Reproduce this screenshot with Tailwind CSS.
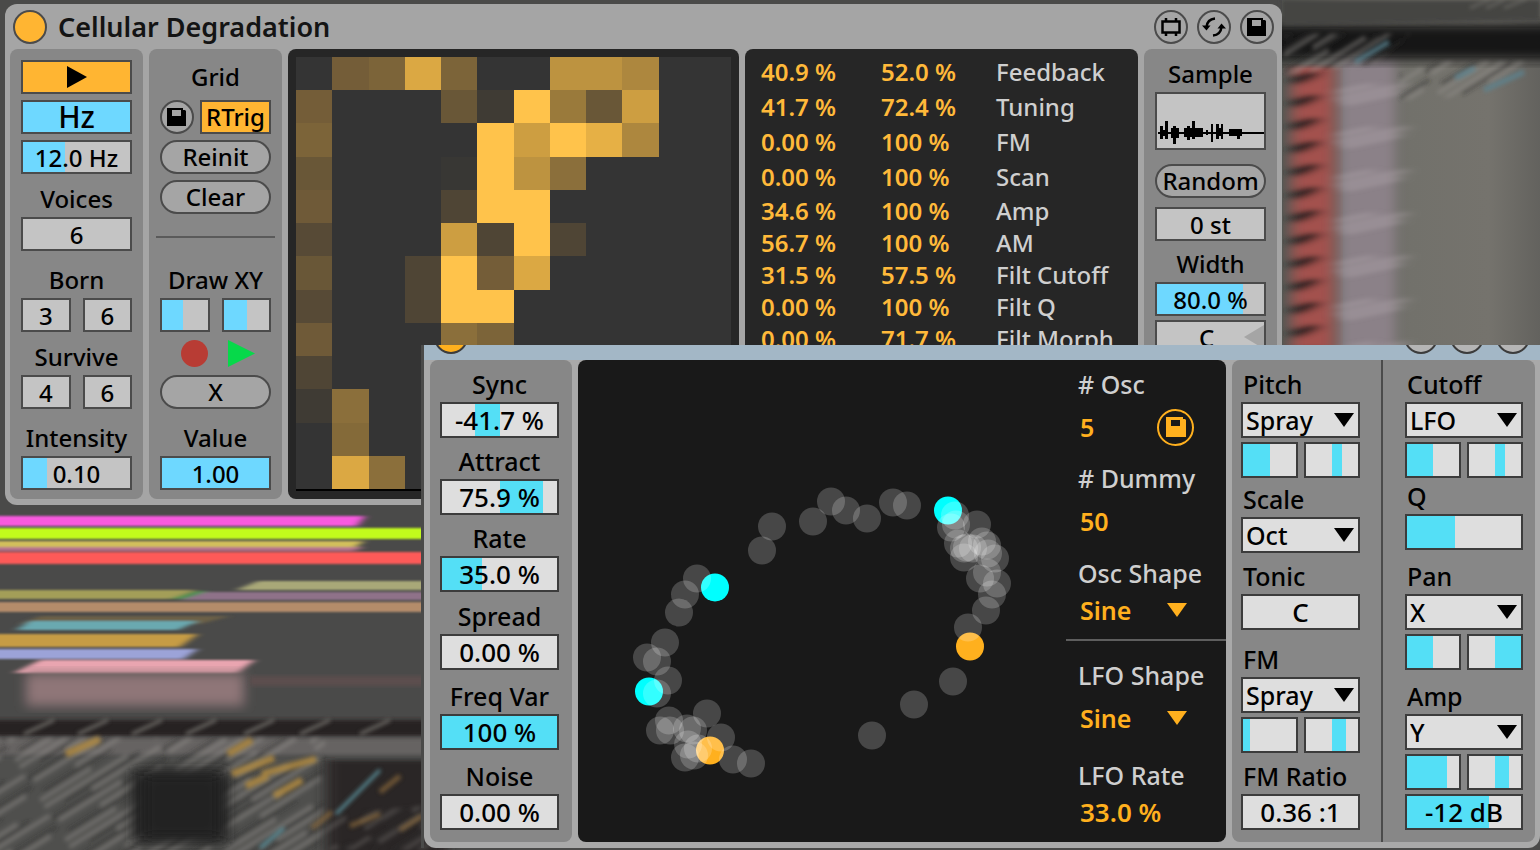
<!DOCTYPE html>
<html lang="en">
<head>
  <meta charset="UTF-8">
  <meta name="viewport" content="width=device-width, initial-scale=1.0">
  <title>Cellular Degradation</title>
  <script src="https://cdn.jsdelivr.net/npm/@tailwindcss/browser@4"></script>
</head>
<body class="relative min-h-screen overflow-hidden bg-[#4a4a49] font-['Noto_Sans',sans-serif] text-2xl font-medium text-black">

  <!-- Blurred arrangement view behind the devices -->
  <svg class="absolute inset-0 h-full w-full" viewBox="0 0 1540 850" preserveAspectRatio="none" aria-hidden="true">
    <defs>
      <filter id="b1" x="-10%" y="-50%" width="120%" height="200%"><feGaussianBlur stdDeviation="4 1"/></filter>
      <filter id="b2" x="-20%" y="-20%" width="140%" height="140%"><feGaussianBlur stdDeviation="6"/></filter>
      <filter id="b3" x="-20%" y="-20%" width="140%" height="140%"><feGaussianBlur stdDeviation="2"/></filter>
      <filter id="b4" x="-20%" y="-20%" width="140%" height="140%"><feGaussianBlur stdDeviation="7 2"/></filter>
      <linearGradient id="wall" x1="0" x2="1" y1="0" y2="0">
        <stop offset="0" stop-color="#555753"/>
        <stop offset=".25" stop-color="#6b6864"/>
        <stop offset=".5" stop-color="#72716b"/>
        <stop offset=".8" stop-color="#75736d"/>
        <stop offset="1" stop-color="#63625e"/>
      </linearGradient>
      <pattern id="streaks" width="130" height="47" patternUnits="userSpaceOnUse" patternTransform="rotate(-32)">
        <path d="M0 3h98M50 13h80M5 22h74M48 31h72M0 42h60" stroke="#94918d" stroke-width="4" opacity=".5"/>
        <path d="M20 8h90M0 17h58M75 26h55M8 36h80" stroke="#2c2b29" stroke-width="4" opacity=".45"/>
      </pattern>
      <pattern id="red" width="300" height="23" patternUnits="userSpaceOnUse" patternTransform="translate(1286 3) skewY(-16)">
        <rect width="300" height="23" fill="#a3514d"/>
        <ellipse cx="14" cy="11" rx="20" ry="5" fill="#2d2422"/>
      </pattern>
      <pattern id="pale" width="300" height="43" patternUnits="userSpaceOnUse" patternTransform="translate(1334 0) skewY(-12)">
        <path d="M0 14h74M8 20h60M0 7h40" stroke="#b7adb2" stroke-width="3" opacity=".6"/>
      </pattern>
    </defs>

    <!-- Right side -->
    <rect x="1282" width="258" height="345" fill="url(#wall)"/>
    <rect x="1340" y="55" width="55" height="300" fill="#8b8188" filter="url(#b2)"/>
    <rect x="1292" y="66" width="42" height="290" fill="url(#red)" filter="url(#b4)"/>
    <rect x="1335" y="80" width="76" height="275" fill="url(#pale)" filter="url(#b4)"/>
    <rect x="1270" y="24" width="290" height="36" fill="#191715" filter="url(#b2)"/>
    <path d="M1282 0h258v20l-258 6z" fill="#444442" filter="url(#b3)"/>
    <path d="M1284 34l60 0 70 0-40 30-90 10z" fill="url(#streaks)" filter="url(#b3)"/>
    <path d="M1400 62h130l-60 34-70 4z" fill="url(#streaks)" filter="url(#b3)"/>
    <g filter="url(#b3)" fill="none" stroke-width="5" opacity=".8">
      <path d="M1355 62l34-20M1484 90l40-18M1455 78l20-10" stroke="#5b8593"/>
      <path d="M1470 8l20-9M1486 8l18-8M1504 8l22-9" stroke="#77756f" stroke-width="2"/>
    </g>

    <!-- Left side clips -->
    <g filter="url(#b1)">
      <path d="M-10 516h375l-8 10H-10z" fill="#f85adf"/>
      <path d="M-10 528h450v11H-10z" fill="#c2fb1c"/>
      <path d="M-10 541h374l-8 6H-10z" fill="#d2bf5c"/>
      <path d="M-10 547h374l-10 4H-10z" fill="#b9738e"/>
      <path d="M-10 552h450v12H-10z" fill="#fd5a59"/>
      <path d="M258 581h180v9H236z" fill="#a9a878"/>
      <path d="M-10 590h206l-24 9H-10z" fill="#a39e58"/>
      <path d="M200 592h240v8H180z" fill="#8f7289"/>
      <path d="M196 591l-26 8h14l24-8z" fill="#4a9150"/>
      <path d="M-10 602h450v10H-10z" fill="#b48c6a"/>
      <path d="M40 616h190l-30 8H20z" fill="#6c6046"/>
      <path d="M30 621h168l-20 9H16z" fill="#6ba9b0"/>
      <path d="M-10 634h208l-18 13H-10z" fill="#c69c45"/>
      <path d="M-10 649h208l-14 10H-10z" fill="#9ca3d8"/>
      <path d="M40 660h215l-18 13H14z" fill="#e9a5b0"/>
    </g>
    <rect x="26" y="673" width="218" height="33" fill="#8f7678" filter="url(#b2)"/>
    <rect x="250" y="676" width="190" height="10" fill="#5c4e4e" filter="url(#b3)"/>

    <!-- Left side device strip -->
    <rect x="-10" y="720" width="450" height="16" fill="#252322" filter="url(#b3)"/>
    <rect x="-10" y="738" width="450" height="18" fill="#666462" filter="url(#b3)"/>
    <rect x="-10" y="756" width="450" height="110" fill="#504f4d" filter="url(#b3)"/>
    <rect x="-10" y="738" width="335" height="130" fill="url(#streaks)" filter="url(#b3)"/>
    <rect x="132" y="770" width="96" height="72" fill="#242220" filter="url(#b2)"/>
    <rect x="146" y="776" width="72" height="60" fill="#242220" filter="url(#b2)"/>
    <rect x="326" y="760" width="120" height="100" fill="#2a2827" filter="url(#b4)"/>
    <path d="M320 850l10-35 100-10v45z" fill="url(#streaks)" filter="url(#b3)" opacity=".6"/>
    <g filter="url(#b3)" fill="none">
      <path d="M232 774l42-16M262 774l54-15M246 786l22-10M274 796l28-16M228 754l24-14M66 754l34-15" stroke="#b08a3e" stroke-width="7" opacity=".85"/>
      <path d="M312 828l20-16M380 792l20-16M350 826l30-12M400 830l22-14" stroke="#8c6b3a" stroke-width="5" opacity=".7"/>
      <path d="M336 814l22-22 22-22M260 848l24-20" stroke="#5d97a3" stroke-width="3"/>
      <path d="M24 734l30-14M78 734l30-14M132 734l30-14M186 734l30-14M244 734l30-14M300 734l30-14M360 734l30-14" stroke="#77756f" stroke-width="3"/>
    </g>
  </svg>

  <!-- Device 1: Cellular Degradation -->
  <main class="absolute top-1 right-[258px] left-[5px] rounded-xl bg-[#a5a5a5] px-[5px] pb-1.5 [&_input]:block [&_input]:h-[34px] [&_input]:w-full [&_input]:min-w-0 [&_input]:appearance-none [&_input]:border-2 [&_input]:border-[#4b4b4b] [&_input]:bg-[#c4c4c4] [&_input]:text-center [&_label]:flex [&_label]:items-end [&_label]:justify-center [&_label]:pb-[3px] [&_label]:leading-[30px]">
    <header class="flex h-[45px] items-center gap-[9px] px-[3px]">
      <button class="size-[34px] rounded-full border-2 border-[#4b4b4b] bg-[#ffb532]" aria-label="Device on"></button>
      <h1 class="grow pl-0.5 text-[27px] font-semibold text-[#141414]">Cellular Degradation</h1>
      <button class="grid size-[34px] place-items-center rounded-full border-2 border-[#4b4b4b]" aria-label="Open window">
        <svg class="size-5" viewBox="0 0 20 20" fill="none" stroke="#000" stroke-width="2.5"><path d="M1.500 4.500h17v11h-17zM5 1v4M15 1v4M5 15v4M15 15v4"/></svg>
      </button>
      <button class="grid size-[34px] place-items-center rounded-full border-2 border-[#4b4b4b]" aria-label="Hot swap">
        <svg class="size-6" viewBox="0 0 24 24" fill="none" stroke="#000" stroke-width="2.5"><path d="M13 3.500C8 4 5 7 4.500 12M11 20.500C16 20 19 17 19.500 12"/><path d="M0 10.500h8.500l-4 5zM24 13.500h-8.500l4-5z" fill="#000" stroke="none"/></svg>
      </button>
      <button class="grid size-[34px] place-items-center rounded-full border-2 border-[#4b4b4b]" aria-label="Save preset">
        <svg class="size-5" viewBox="0 0 20 20"><path fill-rule="evenodd" d="M0 1h16v2h2l1 1v15H0zM5 3v6h9V3z"/></svg>
      </button>
    </header>

    <div class="flex gap-1.5">
      <!-- Clock and rules -->
      <section class="w-[133px] shrink-0 rounded-lg bg-[#878787] px-[11px] pt-[11px] pb-[9px]">
        <div class="flex flex-col gap-1.5">
          <button class="grid h-[34px] place-items-center border-2 border-[#4b4b4b] bg-[#ffb532]" aria-label="Play">
            <svg class="h-[22px] w-5" viewBox="0 0 20 22"><path d="M0 0l20 11L0 22z"/></svg>
          </button>
          <button class="h-[34px] border-2 border-[#4b4b4b] bg-[#6ed8ff] text-[30px] leading-[30px]">Hz</button>
          <input type="text" aria-label="Frequency" value="12.0 Hz" class="bg-[linear-gradient(90deg,#6ed8ff_39%,transparent_39%)]">
        </div>
        <label for="voices" class="h-[43px]">Voices</label>
        <input id="voices" type="text" value="6">
        <label for="born" class="h-[47px]">Born</label>
        <div class="flex gap-3">
          <input id="born" type="text" value="3">
          <input type="text" value="6" aria-label="Born max">
        </div>
        <label for="survive" class="h-[43px]">Survive</label>
        <div class="flex gap-3">
          <input id="survive" type="text" value="4">
          <input type="text" value="6" aria-label="Survive max">
        </div>
        <label for="intensity" class="h-[47px]">Intensity</label>
        <input id="intensity" type="text" value="0.10" class="bg-[linear-gradient(90deg,#6ed8ff_22%,transparent_22%)]">
      </section>

      <!-- Grid controls -->
      <section class="w-[133px] shrink-0 rounded-lg bg-[#878787] px-[11px] pt-[11px] pb-[9px]">
        <h2 class="flex h-10 items-center justify-center pb-1.5">Grid</h2>
        <div class="flex flex-col gap-1.5">
          <div class="flex gap-1.5">
            <button class="grid size-[34px] shrink-0 place-items-center rounded-full border-2 border-[#4b4b4b] bg-[#a5a5a5]" aria-label="Save grid">
              <svg class="size-5" viewBox="0 0 20 20"><path fill-rule="evenodd" d="M0 1h16v2h2l1 1v15H0zM5 3v6h9V3z"/></svg>
            </button>
            <button class="h-[34px] grow border-2 border-[#4b4b4b] bg-[#ffb532] leading-[30px]">RTrig</button>
          </div>
          <button class="h-[34px] rounded-full border-2 border-[#4b4b4b] bg-[#a5a5a5] leading-[30px]">Reinit</button>
          <button class="h-[34px] rounded-full border-2 border-[#4b4b4b] bg-[#a5a5a5] leading-[30px]">Clear</button>
        </div>
        <hr class="-mx-1 mt-[22px] border-t-2 border-[#5a5a5a]">
        <label for="drawx" class="h-[60px]">Draw XY</label>
        <div class="flex gap-3">
          <input id="drawx" type="range" class="bg-[linear-gradient(90deg,#6ed8ff_45%,transparent_45%)] [&::-webkit-slider-thumb]:invisible">
          <input type="range" aria-label="Draw Y" class="bg-[linear-gradient(90deg,#6ed8ff_50%,transparent_50%)] [&::-webkit-slider-thumb]:invisible">
        </div>
        <div class="flex h-[43px] items-center justify-end gap-5 pr-4">
          <button class="size-[27px] rounded-full bg-[#b83c34]" aria-label="Record"></button>
          <button aria-label="Play drawing"><svg class="size-[27px]" viewBox="0 0 27 27"><path d="M0 0l27 13.500L0 27z" fill="#06d94a"/></svg></button>
        </div>
        <button class="block h-[34px] w-full rounded-full border-2 border-[#4b4b4b] bg-[#a5a5a5] leading-[30px]">X</button>
        <label for="value" class="h-[47px]">Value</label>
        <input id="value" type="text" value="1.00" class="bg-[linear-gradient(90deg,#6ed8ff_100%,transparent_100%)]">
      </section>

      <!-- Cell grid -->
      <section class="flex grow flex-col rounded-lg bg-[#262626] p-2">
        <svg class="h-0 w-full shrink-0 grow border-b-2 border-black bg-[#343434]" viewBox="0 0 12 13" preserveAspectRatio="none" shape-rendering="crispEdges">
          <path d="M6 1h1v1H6zM5 2h1v3H5zM7 2h1v1H7zM6 4h1v2H6zM4 6h1v2H4zM5 7h1v1H5z" fill="#ffc34b"/>
          <path d="M3 0h1v1H3zM6 6h1v1H6zM1 12h1v1H1z" fill="#dba843"/>
          <path d="M8 2h1v1H8z" fill="#e6b045"/>
          <path d="M6 2h1v1H6zM4 5h1v1H4zM9 1h1v1H9z" fill="#cd9e41"/>
          <path d="M7 0h2v1H7zM6 3h1v1H6z" fill="#bd9340"/>
          <path d="M9 0h1v1H9zM9 2h1v1H9z" fill="#ad873e"/>
          <path d="M7 1h1v1H7z" fill="#9a7a3b"/>
          <path d="M7 3h1v1H7zM4 8h1v1H4zM1 10h1v1H1zM2 12h1v1H2z" fill="#8b6f3b"/>
          <path d="M1 11h1v1H1z" fill="#846a39"/>
          <path d="M2 0h1v1H2zM4 0h1v1H4zM0 2h1v1H0zM5 8h1v1H5z" fill="#7c6439"/>
          <path d="M1 0h1v1H1zM0 1h1v1H0zM5 6h1v1H5z" fill="#745d38"/>
          <path d="M0 4h1v1H0zM0 8h1v1H0z" fill="#6f5a38"/>
          <path d="M4 1h1v1H4zM8 1h1v1H8zM0 3h1v1H0zM0 6h1v1H0z" fill="#695737"/>
          <path d="M0 5h1v1H0zM0 7h1v1H0z" fill="#574a36"/>
          <path d="M5 5h1v1H5zM4 4h1v1H4zM7 5h1v1H7zM3 6h1v2H3zM0 9h1v1H0z" fill="#4f4535"/>
          <path d="M5 1h1v1H5zM0 10h1v1H0z" fill="#3f3b34"/>
          <path d="M4 3h1v1H4z" fill="#383734"/>
        </svg>
      </section>

      <!-- Modulation amounts -->
      <section class="w-[393px] shrink-0 rounded-lg bg-[#262626] pt-[5px] pl-4">
        <table class="w-full table-fixed text-left leading-8 [&_td]:p-0 [&_td]:font-semibold [&_td]:text-[#ffb93a] [&_th]:p-0 [&_th]:font-medium [&_th]:text-[#cfcfcf]">
          <colgroup><col class="w-[120px]"><col class="w-[115px]"><col></colgroup>
          <tbody>
            <tr class="h-[35px]"><td>40.9 %</td><td>52.0 %</td><th scope="row">Feedback</th></tr>
            <tr class="h-[35px]"><td>41.7 %</td><td>72.4 %</td><th scope="row">Tuning</th></tr>
            <tr class="h-[35px]"><td>0.00 %</td><td>100 %</td><th scope="row">FM</th></tr>
            <tr class="h-[35px]"><td>0.00 %</td><td>100 %</td><th scope="row">Scan</th></tr>
            <tr class="h-[33px]"><td>34.6 %</td><td>100 %</td><th scope="row">Amp</th></tr>
            <tr class="h-8"><td>56.7 %</td><td>100 %</td><th scope="row">AM</th></tr>
            <tr class="h-8"><td>31.5 %</td><td>57.5 %</td><th scope="row">Filt Cutoff</th></tr>
            <tr class="h-8"><td>0.00 %</td><td>100 %</td><th scope="row">Filt Q</th></tr>
            <tr class="h-8"><td>0.00 %</td><td>71.7 %</td><th scope="row">Filt Morph</th></tr>
          </tbody>
        </table>
      </section>

      <!-- Sample -->
      <section class="w-[133px] shrink-0 rounded-lg bg-[#878787] px-[11px]">
        <h2 class="flex h-[43px] items-end justify-center pb-[3px] leading-[30px]">Sample</h2>
        <div class="h-[58px] border-2 border-[#4b4b4b] bg-[#c4c4c4]">
          <svg class="h-full w-full" viewBox="0 0 108 54" preserveAspectRatio="none" shape-rendering="crispEdges">
            <path d="M1 38h107v2H1zM3 32h3v13H3zM8 27h3v18H8zM6 36h4v6H6zM14 34h8v10h-8zM16 32h3v18h-3zM27 34h19v9H27zM30 32h3v14h-3zM35 27h3v18h-3zM49 36h2v5h-2zM54 30h3v18h-3zM60 30h3v15h-3zM63 34h3v8h-3zM65 30h2v15h-2zM73 35h13v7H73zM81 35h3v10h-3z"/>
          </svg>
        </div>
        <button class="mt-[14px] block h-[34px] w-full rounded-full border-2 border-[#4b4b4b] bg-[#a5a5a5] text-center leading-[30px]">Random</button>
        <input type="text" value="0 st" aria-label="Transpose" class="mt-[9px]">
        <label for="width" class="h-[41px]">Width</label>
        <input id="width" type="text" value="80.0 %" class="bg-[linear-gradient(90deg,#6ed8ff_80%,transparent_80%)]">
        <div class="mt-1 grid items-center">
          <input type="text" value="C" aria-label="Root note" class="col-start-1 row-start-1 pr-2">
          <svg class="col-start-1 row-start-1 mr-0.5 h-6 w-5 justify-self-end" viewBox="0 0 20 24"><path d="M20 0v24L0 12z" fill="#a5a5a5"/></svg>
        </div>
      </section>
    </div>
  </main>

  <!-- Device 2: oscillator swarm -->
  <aside class="absolute top-[345px] right-0 left-[421px] border-l-[3px] border-[#4a4a49] text-[25px]">
    <div class="overflow-hidden rounded-b-xl bg-[#a9a9a9] pb-1.5 [&_input]:block [&_input]:h-9 [&_input]:w-full [&_input]:min-w-0 [&_input]:appearance-none [&_input]:border-2 [&_input]:border-[#3c3c3c] [&_input]:bg-[#dedede] [&_input]:text-center [&_input]:text-[26px] [&_label]:flex [&_label]:items-end [&_label]:pb-[3px] [&_label]:leading-[30px] [&_label]:whitespace-nowrap">
      <header class="flex h-[15px] items-end gap-3 overflow-hidden bg-[#a3b7c6] pr-2.5 pb-1.5 pl-2.5">
        <button class="mr-auto size-[34px] shrink-0 rounded-full border-2 border-[#3c3c3c] bg-[#ffb01e]" aria-label="Device on"></button>
        <button class="size-[34px] shrink-0 rounded-full border-2 border-[#3c3c3c] bg-[#b5b5b5]" aria-label="Open window"></button>
        <button class="size-[34px] shrink-0 rounded-full border-2 border-[#3c3c3c] bg-[#b5b5b5]" aria-label="Hot swap"></button>
        <button class="size-[34px] shrink-0 rounded-full border-2 border-[#3c3c3c] bg-[#b5b5b5]" aria-label="Save preset"></button>
      </header>

      <div class="flex gap-1.5 pr-[5px] pl-1.5">
        <!-- Swarm parameters -->
        <section class="w-[142px] shrink-0 rounded-lg bg-[#878787] pr-[13px] pb-3 pl-2.5 [&_label]:justify-center">
          <label for="sync" class="h-[42px]">Sync</label>
          <input id="sync" type="text" value="-41.7 %" class="bg-[linear-gradient(90deg,transparent_29%,#54dff6_29%_50%,transparent_50%)]">
          <label for="attract" class="h-[41px]">Attract</label>
          <input id="attract" type="text" value="75.9 %" class="bg-[linear-gradient(90deg,transparent_50%,#54dff6_50%_88%,transparent_88%)]">
          <label for="rate" class="h-[41px]">Rate</label>
          <input id="rate" type="text" value="35.0 %" class="bg-[linear-gradient(90deg,#54dff6_35%,transparent_35%)]">
          <label for="spread" class="h-[42px]">Spread</label>
          <input id="spread" type="text" value="0.00 %">
          <label for="freqvar" class="h-11">Freq Var</label>
          <input id="freqvar" type="text" value="100 %" class="bg-[linear-gradient(90deg,#54dff6_100%,transparent_100%)]">
          <label for="noise" class="h-11">Noise</label>
          <input id="noise" type="text" value="0.00 %">
        </section>

        <!-- Oscillator field -->
        <section class="flex grow rounded-lg bg-[#191919]">
          <div class="relative grow">
            <svg class="absolute inset-0 h-full w-full" viewBox="0 0 488 481">
              <g fill="#00ffff"><circle cx="370" cy="150" r="14"/><circle cx="137" cy="227" r="14"/><circle cx="71" cy="331" r="14"/></g>
              <g fill="#ffb01e"><circle cx="392" cy="286" r="14"/><circle cx="132" cy="390" r="14"/></g>
              <g fill="#fff" fill-opacity=".2">
                <circle cx="253" cy="141" r="14"/><circle cx="268" cy="150" r="14"/><circle cx="289" cy="158" r="14"/>
                <circle cx="235" cy="161" r="14"/><circle cx="315" cy="142" r="14"/><circle cx="329" cy="145" r="14"/>
                <circle cx="194" cy="166" r="14"/><circle cx="184" cy="190" r="14"/><circle cx="119" cy="218" r="14"/>
                <circle cx="107" cy="234" r="14"/><circle cx="101" cy="252" r="14"/><circle cx="87" cy="282" r="14"/>
                <circle cx="69" cy="297" r="14"/><circle cx="79" cy="301" r="14"/><circle cx="90" cy="320" r="14"/>
                <circle cx="79" cy="333" r="14"/><circle cx="129" cy="353" r="14"/><circle cx="91" cy="360" r="14"/>
                <circle cx="82" cy="370" r="14"/><circle cx="92" cy="370" r="14"/><circle cx="109" cy="368" r="14"/>
                <circle cx="115" cy="370" r="14"/><circle cx="143" cy="377" r="14"/><circle cx="110" cy="384" r="14"/>
                <circle cx="107" cy="397" r="14"/><circle cx="116" cy="395" r="14"/><circle cx="120" cy="388" r="14"/>
                <circle cx="155" cy="399" r="14"/><circle cx="173" cy="403" r="14"/><circle cx="377" cy="155" r="14"/>
                <circle cx="399" cy="164" r="14"/><circle cx="373" cy="167" r="14"/><circle cx="378" cy="164" r="14"/>
                <circle cx="380" cy="183" r="14"/><circle cx="389" cy="187" r="14"/><circle cx="386" cy="188" r="14"/>
                <circle cx="386" cy="197" r="14"/><circle cx="404" cy="181" r="14"/><circle cx="409" cy="185" r="14"/>
                <circle cx="395" cy="188" r="14"/><circle cx="410" cy="193" r="14"/><circle cx="417" cy="198" r="14"/>
                <circle cx="409" cy="212" r="14"/><circle cx="402" cy="218" r="14"/><circle cx="419" cy="223" r="14"/>
                <circle cx="414" cy="234" r="14"/><circle cx="408" cy="250" r="14"/><circle cx="390" cy="267" r="14"/>
                <circle cx="375" cy="321" r="14"/><circle cx="336" cy="344" r="14"/><circle cx="294" cy="375" r="14"/>
              </g>
            </svg>
          </div>
          <div class="w-40 shrink-0 pt-2 leading-8 text-[#cfcfcf] [&_h3]:pl-3">
            <h3># Osc</h3>
            <div class="mt-[11px] flex h-8 items-center justify-between pr-8 pl-[14px] font-semibold text-[#ffb01e]">
              <span>5</span>
              <button class="grid size-[37px] place-items-center rounded-full border-2 border-[#ffb01e]" aria-label="Save swarm">
                <svg class="size-5" viewBox="0 0 20 20"><path fill="#ffb01e" fill-rule="evenodd" d="M0 0h17v2h2l1 1v17H0zM5 3v6h9V3z"/></svg>
              </button>
            </div>
            <h3 class="mt-[19px]"># Dummy</h3>
            <p class="mt-[11px] pl-[14px] font-semibold text-[#ffb01e]">50</p>
            <h3 class="mt-5">Osc Shape</h3>
            <div class="mt-[5px] grid items-center pr-[39px] pl-[14px]">
              <select aria-label="Osc Shape" class="col-start-1 row-start-1 h-8 appearance-none font-semibold text-[#ffb01e]"><option>Sine</option></select>
              <svg class="pointer-events-none col-start-1 row-start-1 h-[14px] w-5 justify-self-end" viewBox="0 0 20 14"><path d="M0 0h20L10 14z" fill="#ffb01e"/></svg>
            </div>
            <hr class="mt-[13px] border-t-2 border-[#5e5e5e]">
            <h3 class="mt-[18px]">LFO Shape</h3>
            <div class="mt-[11px] grid items-center pr-[39px] pl-[14px]">
              <select aria-label="LFO Shape" class="col-start-1 row-start-1 h-8 appearance-none font-semibold text-[#ffb01e]"><option>Sine</option></select>
              <svg class="pointer-events-none col-start-1 row-start-1 h-[14px] w-5 justify-self-end" viewBox="0 0 20 14"><path d="M0 0h20L10 14z" fill="#ffb01e"/></svg>
            </div>
            <h3 class="mt-[25px]">LFO Rate</h3>
            <p class="mt-[5px] pl-[14px] text-[26px] font-semibold text-[#ffb01e]">33.0 %</p>
          </div>
        </section>

        <!-- Modulation targets -->
        <section class="flex w-[303px] shrink-0 rounded-lg bg-[#878787] [&_select]:col-start-1 [&_select]:row-start-1 [&_select]:h-9 [&_select]:w-full [&_select]:appearance-none [&_select]:border-2 [&_select]:border-[#3c3c3c] [&_select]:bg-[#dedede] [&_select]:pl-[3px] [&_select]:leading-8">
          <div class="w-[151px] shrink-0 border-r-2 border-[#4b4b4b] pr-[21px] pl-[9px]">
            <label for="pitch" class="h-[42px] pl-0.5">Pitch</label>
            <div class="grid items-center">
              <select id="pitch"><option>Spray</option></select>
              <svg class="pointer-events-none col-start-1 row-start-1 mr-1.5 h-[14px] w-5 justify-self-end" viewBox="0 0 20 14"><path d="M0 0h20L10 14z"/></svg>
            </div>
            <div class="mt-1 flex gap-1.5">
              <input type="range" aria-label="Pitch amount" class="bg-[linear-gradient(90deg,#54dff6_50%,transparent_50%)] [&::-webkit-slider-thumb]:invisible">
              <input type="range" aria-label="Pitch spread" class="bg-[linear-gradient(90deg,transparent_50%,#54dff6_50%_70%,transparent_70%)] [&::-webkit-slider-thumb]:invisible">
            </div>
            <label for="scale" class="h-[39px] pl-0.5">Scale</label>
            <div class="grid items-center">
              <select id="scale"><option>Oct</option></select>
              <svg class="pointer-events-none col-start-1 row-start-1 mr-1.5 h-[14px] w-5 justify-self-end" viewBox="0 0 20 14"><path d="M0 0h20L10 14z"/></svg>
            </div>
            <label for="tonic" class="h-[41px] pl-0.5">Tonic</label>
            <input id="tonic" type="text" value="C">
            <label for="fm" class="h-[47px] pl-0.5">FM</label>
            <div class="grid items-center">
              <select id="fm"><option>Spray</option></select>
              <svg class="pointer-events-none col-start-1 row-start-1 mr-1.5 h-[14px] w-5 justify-self-end" viewBox="0 0 20 14"><path d="M0 0h20L10 14z"/></svg>
            </div>
            <div class="mt-1 flex gap-1.5">
              <input type="range" aria-label="FM amount" class="bg-[linear-gradient(90deg,#54dff6_14%,transparent_14%)] [&::-webkit-slider-thumb]:invisible">
              <input type="range" aria-label="FM spread" class="bg-[linear-gradient(90deg,transparent_50%,#54dff6_50%_76%,transparent_76%)] [&::-webkit-slider-thumb]:invisible">
            </div>
            <label for="ratio" class="h-[41px] pl-0.5">FM Ratio</label>
            <input id="ratio" type="text" value="0.36 :1">
          </div>

          <div class="grow pr-3 pl-[22px]">
            <label for="cutoff" class="h-[42px] pl-0.5">Cutoff</label>
            <div class="grid items-center">
              <select id="cutoff"><option>LFO</option></select>
              <svg class="pointer-events-none col-start-1 row-start-1 mr-1.5 h-[14px] w-5 justify-self-end" viewBox="0 0 20 14"><path d="M0 0h20L10 14z"/></svg>
            </div>
            <div class="mt-1 flex gap-1.5">
              <input type="range" aria-label="Cutoff amount" class="bg-[linear-gradient(90deg,#54dff6_50%,transparent_50%)] [&::-webkit-slider-thumb]:invisible">
              <input type="range" aria-label="Cutoff spread" class="bg-[linear-gradient(90deg,transparent_50%,#54dff6_50%_70%,transparent_70%)] [&::-webkit-slider-thumb]:invisible">
            </div>
            <label for="q" class="h-9 pl-0.5">Q</label>
            <input id="q" type="range" class="bg-[linear-gradient(90deg,#54dff6_42%,transparent_42%)] [&::-webkit-slider-thumb]:invisible">
            <label for="pan" class="h-11 pl-0.5">Pan</label>
            <div class="grid items-center">
              <select id="pan"><option>X</option></select>
              <svg class="pointer-events-none col-start-1 row-start-1 mr-1.5 h-[14px] w-5 justify-self-end" viewBox="0 0 20 14"><path d="M0 0h20L10 14z"/></svg>
            </div>
            <div class="mt-1 flex gap-1.5">
              <input type="range" aria-label="Pan amount" class="bg-[linear-gradient(90deg,#54dff6_50%,transparent_50%)] [&::-webkit-slider-thumb]:invisible">
              <input type="range" aria-label="Pan spread" class="bg-[linear-gradient(90deg,transparent_50%,#54dff6_50%)] [&::-webkit-slider-thumb]:invisible">
            </div>
            <label for="amp" class="h-11 pl-0.5">Amp</label>
            <div class="grid items-center">
              <select id="amp"><option>Y</option></select>
              <svg class="pointer-events-none col-start-1 row-start-1 mr-1.5 h-[14px] w-5 justify-self-end" viewBox="0 0 20 14"><path d="M0 0h20L10 14z"/></svg>
            </div>
            <div class="mt-1 flex gap-1.5">
              <input type="range" aria-label="Amp amount" class="bg-[linear-gradient(90deg,#54dff6_76%,transparent_76%)] [&::-webkit-slider-thumb]:invisible">
              <input type="range" aria-label="Amp spread" class="bg-[linear-gradient(90deg,transparent_50%,#54dff6_50%_76%,transparent_76%)] [&::-webkit-slider-thumb]:invisible">
            </div>
            <input type="text" value="-12 dB" aria-label="Output level" class="mt-1 bg-[linear-gradient(90deg,#54dff6_72%,transparent_72%)]">
          </div>
        </section>
      </div>
    </div>
  </aside>
</body>
</html>
